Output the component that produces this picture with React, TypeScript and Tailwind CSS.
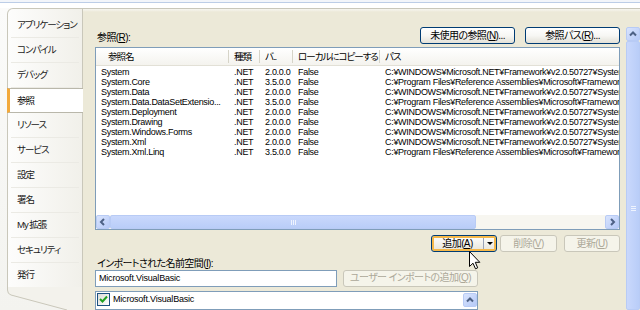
import React from "react";

const tabs = [
  "アプリケーション",
  "コンパイル",
  "デバッグ",
  "参照",
  "リソース",
  "サービス",
  "設定",
  "署名",
  "My 拡張",
  "セキュリティ",
  "発行",
];

const WIN = "C:¥WINDOWS¥Microsoft.NET¥Framework¥v2.0.50727¥";
const PF = "C:¥Program Files¥Reference Assemblies¥Microsoft¥Framework¥v3.5¥";

const refs = [
  ["System", ".NET", "2.0.0.0", "False", WIN + "System.dll"],
  ["System.Core", ".NET", "3.5.0.0", "False", PF + "System.Core.dll"],
  ["System.Data", ".NET", "2.0.0.0", "False", WIN + "System.Data.dll"],
  ["System.Data.DataSetExtensio...", ".NET", "3.5.0.0", "False", PF + "System.Data.DataSetExtensions.dll"],
  ["System.Deployment", ".NET", "2.0.0.0", "False", WIN + "System.Deployment.dll"],
  ["System.Drawing", ".NET", "2.0.0.0", "False", WIN + "System.Drawing.dll"],
  ["System.Windows.Forms", ".NET", "2.0.0.0", "False", WIN + "System.Windows.Forms.dll"],
  ["System.Xml", ".NET", "2.0.0.0", "False", WIN + "System.XML.dll"],
  ["System.Xml.Linq", ".NET", "3.5.0.0", "False", PF + "System.Xml.Linq.dll"],
];

const cols = "grid grid-cols-[133px_31px_33px_87px_1fr]";

// XP風ボタン
const XpButton: React.FC<{ w: string; disabled?: boolean; children: React.ReactNode }> = ({ w, disabled, children }) => (
  <div
    className={
      disabled
        ? `${w} h-[17px] rounded-[3px] border border-[#c9c7ba] bg-[#f5f4ea] text-[#aca899] flex items-center justify-center`
        : `${w} h-[17px] rounded-[3px] border border-[#003c74] bg-gradient-to-b from-white via-[#f7f7f4] to-[#e3e1d8] flex items-center justify-center`
    }
  >
    {children}
  </div>
);

const Chevron: React.FC<{ dir: "left" | "right" | "up" }> = ({ dir }) => {
  const d =
    dir === "left" ? "M6 2 L3 5 L6 8" : dir === "right" ? "M4 2 L7 5 L4 8" : "M2 6.5 L5 3.5 L8 6.5";
  return (
    <svg width="10" height="10" viewBox="0 0 10 10">
      <path d={d} fill="none" stroke="#4d6185" strokeWidth="2" />
    </svg>
  );
};

const ScrollBtn: React.FC<{ dir: "left" | "right" | "up" }> = ({ dir }) => (
  <div className="w-[14px] h-[14px] shrink-0 rounded-[2px] border border-[#b8cbf5] bg-gradient-to-br from-[#d9e4fd] to-[#b5c9f7] flex items-center justify-center">
    <Chevron dir={dir} />
  </div>
);

const App: React.FC = () => {
  return (
    <div className="w-[640px] h-[310px] overflow-hidden flex flex-col bg-white text-[10px] leading-none tracking-[-0.6px] whitespace-nowrap text-black font-['Liberation_Sans','Noto_Sans_CJK_JP',sans-serif] [font-feature-settings:'palt'] relative">
      {/* 上部の帯 */}
      <div className="h-[8px] shrink-0 bg-white">
        <div className="h-[2px] bg-[#f2f5fa]" />
        <div className="h-px bg-[#bccde7]" />
      </div>

      <div className="flex flex-1 min-h-0">
        {/* 左側のタブ */}
        <div className="w-[83px] shrink-0 flex flex-col pl-[7px] bg-gradient-to-b from-[#fbfbfa] to-[#f3f3ef]">
          <div className="flex flex-col border-l border-t border-r border-[#c9c7ba] rounded-tl-[6px] bg-gradient-to-r from-[#fdfdfc] to-[#f1f0ea] pt-[4px] text-[9.5px] tracking-[-1px]">
            {tabs.map((t) =>
              t === "参照" ? (
                <div
                  key={t}
                  className="h-[25px] -mr-px -ml-px flex items-center bg-white border-y border-[#b9b7aa] border-l-[3px] border-l-[#f2a93b] pl-[7px]"
                >
                  {t}
                </div>
              ) : (
                <div key={t} className="h-[25px] flex items-center pl-[6px] mx-[3px] border-b border-[#ebeae4] text-[#1a1a1a]">
                  {t}
                </div>
              )
            )}
          </div>
          <svg width="76" height="23" viewBox="0 0 76 23" className="-mt-px">
            <path d="M0 0 L0 3 Q0 7 4 8 L60 23 L76 23 L76 0 Z" fill="#f3f2ec" />
            <path d="M0.5 0 L0.5 3 Q0.5 7 4 8 L60 23" fill="none" stroke="#c9c7ba" />
            <path d="M75.5 0 L75.5 23" stroke="#c9c7ba" />
          </svg>
        </div>

        {/* 右側のメイン */}
        <div className="flex-1 flex flex-col border-t border-[#c9c7ba]">
          <div className="h-[3px] shrink-0 bg-gradient-to-b from-[#f7f6f1] to-[#ece9d8]" />
          <div className="flex-1 flex bg-[#ece9d8] min-h-0">
            <div className="w-[537px] pl-[12px] flex flex-col">
              {/* 参照ボタン行 */}
              <div className="mt-[15px] flex items-end justify-between">
                <div className="pb-[1px] pl-[2px]">
                  参照(<span className="underline">R</span>):
                </div>
                <div className="flex gap-[10px]">
                  <XpButton w="w-[95px]">
                    未使用の参照(<span className="underline">N</span>)...
                  </XpButton>
                  <XpButton w="w-[95px]">
                    参照パス(<span className="underline">R</span>)...
                  </XpButton>
                </div>
              </div>

              {/* 参照リスト */}
              <div className="mt-[3px] h-[190px] border border-[#7f9db9] bg-white flex flex-col">
                <div className={`${cols} h-[18px] shrink-0 bg-gradient-to-b from-white to-[#f4f3ee] border-b border-[#e2e0d6] text-[9.5px] tracking-[-1px]`}>
                  {["参照名", "種類", "バ..", "ローカルにコピーする", "パス"].map((h, i) => (
                    <div
                      key={h}
                      className={
                        i === 0
                          ? "flex items-center pl-[12px] border-r border-[#d6d4c8] my-[2px] overflow-hidden"
                          : i === 4
                          ? "flex items-center pl-[5px] my-[2px] overflow-hidden"
                          : "flex items-center pl-[5px] border-r border-[#d6d4c8] my-[2px] overflow-hidden"
                      }
                    >
                      {h}
                    </div>
                  ))}
                </div>
                <div className="flex-1 pt-[1px] text-[9px] tracking-[-0.3px]">
                  {refs.map((r) => (
                    <div key={r[0]} className={`${cols} h-[10px] leading-[10px]`}>
                      {r.map((c, i) => (
                        <div key={i} className="pl-[5px] overflow-hidden">
                          {c}
                        </div>
                      ))}
                    </div>
                  ))}
                </div>
                {/* 横スクロールバー */}
                <div className="h-[14px] shrink-0 flex bg-[#f7f6f0]">
                  <ScrollBtn dir="left" />
                  <div className="w-[366px] h-full rounded-[2px] border border-[#b8cbf5] bg-gradient-to-b from-[#c9d8fc] to-[#b9cdf8] flex items-center justify-center gap-[1px]">
                    <div className="w-px h-[5px] bg-[#eef3fe]" />
                    <div className="w-px h-[5px] bg-[#eef3fe]" />
                    <div className="w-px h-[5px] bg-[#eef3fe]" />
                  </div>
                  <div className="flex-1" />
                  <ScrollBtn dir="right" />
                </div>
              </div>

              {/* 追加・削除・更新 */}
              <div className="mt-[5px] flex justify-end">
                <div className="w-[66px] h-[17px] rounded-[3px] border border-[#003c74] bg-gradient-to-b from-white to-[#e6e4da] shadow-[inset_0_0_0_2px_#f5b84a] flex">
                  <div className="flex-1 flex items-center justify-center">
                    追加(<span className="underline">A</span>)
                  </div>
                  <div className="w-[13px] flex items-center justify-center border-l border-[#9aa4b8] my-[2px]">
                    <svg width="6" height="4" viewBox="0 0 6 4">
                      <path d="M0 0 L6 0 L3 3 Z" fill="#000" />
                    </svg>
                  </div>
                </div>
                <div className="ml-[3px]">
                  <XpButton w="w-[57px]" disabled>
                    削除(<span className="underline">V</span>)
                  </XpButton>
                </div>
                <div className="ml-[7px]">
                  <XpButton w="w-[56px]" disabled>
                    更新(<span className="underline">U</span>)
                  </XpButton>
                </div>
              </div>

              {/* インポート */}
              <div className="mt-[6px] h-[11px] flex items-end pl-[2px]">
                インポートされた名前空間(<span className="underline">I</span>):
              </div>
              <div className="mt-[1px] flex gap-[6px]">
                <div className="w-[242px] h-[17px] border border-[#7f9db9] bg-white flex items-center pl-[3px] text-[9px] tracking-[-0.2px]">
                  Microsoft.VisualBasic
                </div>
                <XpButton w="w-[135px]" disabled>
                  ユーザー インポートの追加(<span className="underline">Q</span>)
                </XpButton>
              </div>
              <div className="mt-[4px] w-[383px] h-[20px] border border-[#7f9db9] bg-white flex items-start pt-[1px] pl-[1px]">
                <div className="w-[13px] h-[13px] border border-[#1c5180] bg-gradient-to-br from-[#dcdcd7] to-white flex items-center justify-center">
                  <svg width="9" height="9" viewBox="0 0 9 9">
                    <path d="M1 4 L3.5 6.5 L8 1.5" fill="none" stroke="#21a121" strokeWidth="2" />
                  </svg>
                </div>
                <div className="ml-[3px] mt-[2px] text-[9px] tracking-[-0.2px]">Microsoft.VisualBasic</div>
                <div className="flex-1" />
                <ScrollBtn dir="up" />
              </div>
            </div>

            {/* 縦スクロールバー */}
            <div className="ml-[6px] w-[14px] mt-[15px] flex flex-col">
              <ScrollBtn dir="up" />
              <div className="flex-1 rounded-[2px] border border-[#b8cbf5] bg-gradient-to-r from-[#c9d8fc] to-[#b9cdf8] flex flex-col items-center pt-[164px] gap-[1px]">
                <div className="w-[5px] h-px bg-[#eef3fe]" />
                <div className="w-[5px] h-px bg-[#eef3fe]" />
                <div className="w-[5px] h-px bg-[#eef3fe]" />
              </div>
            </div>
          </div>
        </div>
      </div>

      {/* マウスカーソル */}
      <svg width="12" height="19" viewBox="0 0 12 19" className="absolute left-[469px] top-[251px]">
        <path d="M0.5 0.5 L0.5 15.5 L4 12.2 L6.5 17.8 L8.7 16.8 L6.3 11.3 L10.8 11.3 Z" fill="#fff" stroke="#000" />
      </svg>
    </div>
  );
};

export default App;
